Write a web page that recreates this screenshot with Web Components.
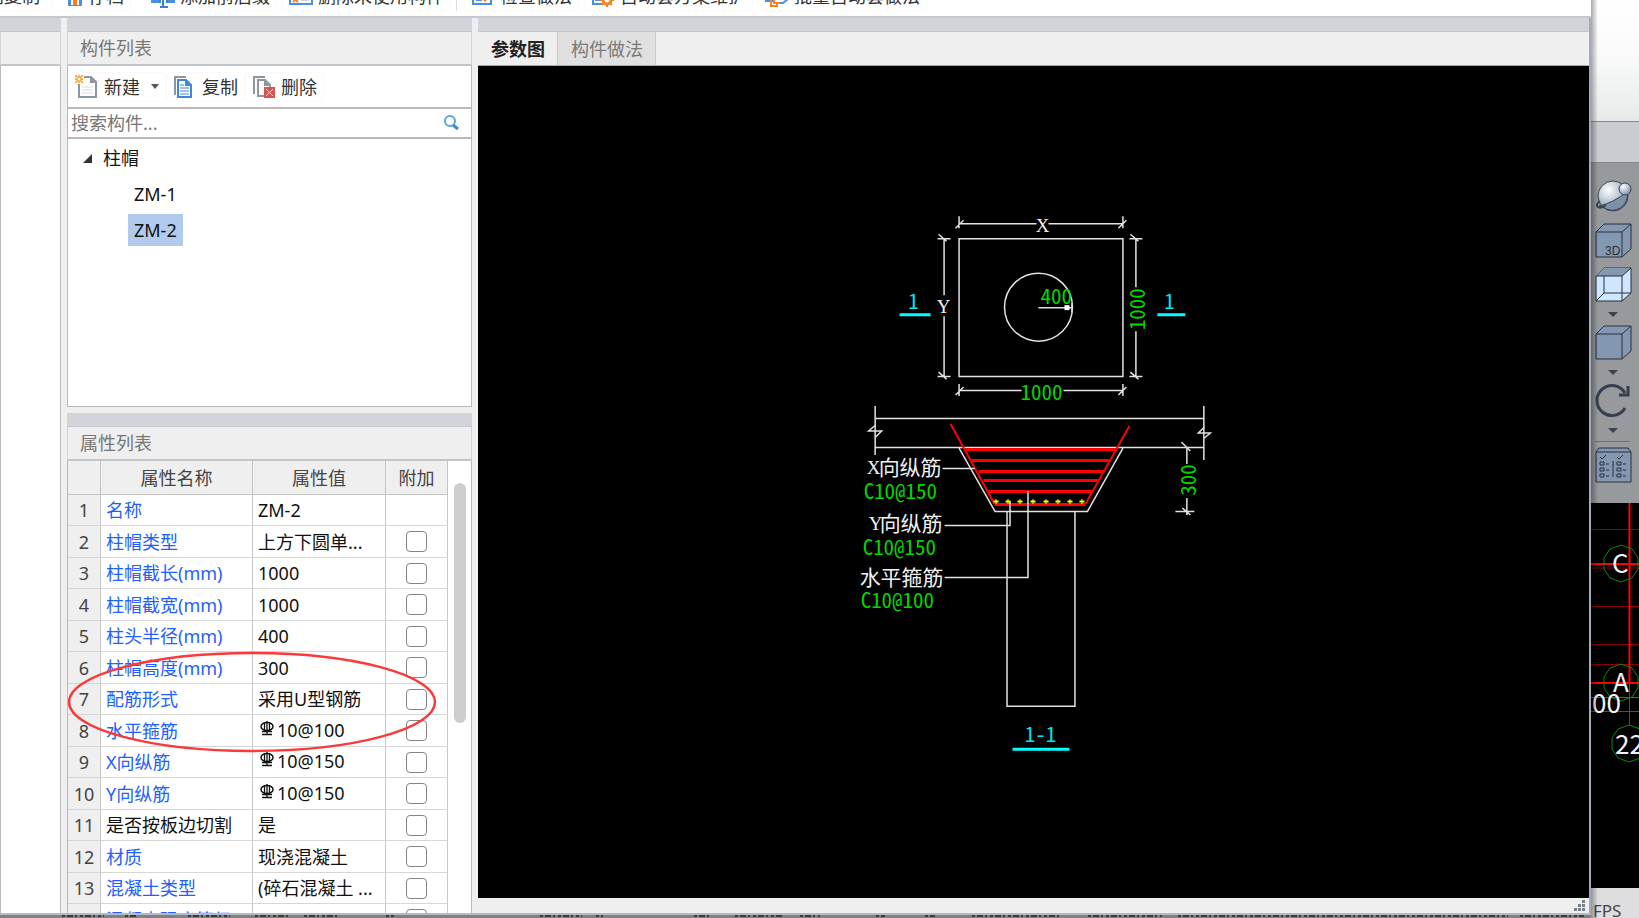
<!DOCTYPE html>
<html lang="zh-CN">
<head>
<meta charset="utf-8">
<title>构件列表</title>
<style>
	html, body { margin: 0; height: 100%; }
	body {
		overflow: hidden; background: #7f8183; color: #1a1a1a;
		font: 18px/24px "Noto Sans", "Noto Sans CJK SC", sans-serif;
	}
	.desk { display: flex; height: 100%; }
</style>
</head>
<body>
<div class="desk">
	<app-window></app-window>
	<view-strip></view-strip>
</div>

<script>
const define = (name, html, setup) => {
	const template = document.createElement('template');
	template.innerHTML = html;
	customElements.define(name, class extends HTMLElement {
		constructor() {
			super();
			this.attachShadow({ mode: 'open' }).append(template.content.cloneNode(true));
		}
		connectedCallback() {
			if (setup) setup(this, this.shadowRoot);
		}
	});
};

const ICONS = {
	save: `<path d="M8 3H1v12h7" fill="#fff" stroke="#4a90e2" stroke-width="2"/><path d="M9 4h14v18H9z" fill="#4a90e2"/><path d="M12 12h8v9h-8z" fill="#fff"/><path d="M14 15h4v6h-4z" fill="#f58220"/>`,
	affix: `<path d="M0 8h8v11H0z M17 8h7v11h-7z" fill="#4a90e2"/><path d="M9 19V6h7v13 M12 6v16 M9 23h8" fill="none" stroke="#3b7fd4" stroke-width="2"/>`,
	unused: `<path d="M1 5h22v15H1z" fill="#fff" stroke="#4a90e2" stroke-width="2"/><path d="M4 13l5 5M9 13l-5 5" stroke="#f58220" stroke-width="2"/><path d="M12 16h8" stroke="#9ab"/>`,
	check: `<path d="M2 5h18v15H2z" fill="#fff" stroke="#4a90e2" stroke-width="2"/><path d="M5 16h6" stroke="#4a90e2" stroke-width="2"/><path d="M10 13l4-5 4 5-4 5z" fill="#f36f21"/>`,
	scheme: `<path d="M11 20H2V5h17v6" fill="#fff" stroke="#4a90e2" stroke-width="2"/><path d="M4 16h5" stroke="#4a90e2" stroke-width="2"/><circle cx="16" cy="16" r="4" fill="#fff" stroke="#f58220" stroke-width="3"/><path d="M16 9v3M16 20v3M9 16h3M20 16h3M11 11l2 2M19 19l2 2M21 11l-2 2M13 19l-2 2" stroke="#f58220" stroke-width="2"/>`,
	batch: `<path d="M1 4h14v13H1z" fill="#fff" stroke="#4a90e2" stroke-width="2"/><path d="M9 7h14v8l-5 4H9z" fill="#fff" stroke="#4a90e2" stroke-width="2"/><path d="M6 12v10h6v-3M9 12v7h6" fill="none" stroke="#f58220" stroke-width="2"/>`,
	create: `<path d="M4 9v13h17V7l-5-5H9" fill="#fff" stroke="#8b969f" stroke-width="2"/><path d="M15 2v6h6z" fill="#8b969f"/><path d="M7 12h11M7 15h11M7 18h11" stroke="#dcdce4" stroke-width="1"/><path d="M0 0l8 8M8 0l-8 8M4 0v8M0 4h8" stroke="#ff9c1a" stroke-width="1.5"/><circle cx="4" cy="4" r="2" fill="#fff" stroke="#ff9c1a"/>`,
	copy: `<path d="M2 20V2h11" fill="none" stroke="#8b969f" stroke-width="2"/><path d="M5 5h8l5 5v12H5z" fill="#fff" stroke="#3f86dc" stroke-width="2"/><path d="M12 5v6h6z" fill="#3f86dc"/><path d="M7 10h4M7 13h9M7 16h9M7 19h9" stroke="#3f86dc" stroke-width="1"/>`,
	remove: `<path d="M2 19V2h11" fill="none" stroke="#8b969f" stroke-width="2"/><path d="M12 21H6V5h7l5 5v2" fill="#fff" stroke="#8b969f" stroke-width="2"/><path d="M12 5v6h6z" fill="#8b969f"/><path d="M12 12h11v11H12z" fill="#d9534f"/><path d="M14 14l7 7M21 14l-7 7" stroke="#fff" stroke-width="1"/>`
};

define('tool-button', `
	<style>
		:host { display: block; flex-shrink: 0; }
		button {
			display: flex; align-items: center; gap: 5px; height: 30px; padding: 0 6px;
			background: #fff; border: 1px solid #fafafa; border-radius: 4px;
			color: #333; font: inherit; white-space: nowrap;
		}
		svg { width: 24px; height: 24px; }
		svg:empty { display: none; }
		.arrow { display: none; border: 4px solid transparent; border-top: 5px solid #555; border-bottom: 0; margin-left: 6px; }
		:host([menu]) .arrow { display: block; }
	</style>
	<button type="button"><svg viewBox="0 0 24 24"></svg><slot></slot><span class="arrow"></span></button>
`, (el, root) => {
	root.querySelector('svg').innerHTML = ICONS[el.getAttribute('icon')] || '';
});

define('dock-panel', `
	<style>
		:host { display: flex; flex-direction: column; min-width: 0; min-height: 0; background: #efefef; }
		.grip { height: 13px; flex-shrink: 0; background: #d2d4da; border-bottom: 1px solid #c5c9cf; }
		header {
			display: flex; align-items: center; height: 32px; flex-shrink: 0; padding-left: 12px;
			border: 1px solid #d0d2d5; border-width: 0 1px; border-bottom: 2px solid #c2c6ca; color: #777;
		}
		.body {
			flex: 1; min-height: 0; display: flex; flex-direction: column; background: #fff;
			border: 1px solid #b9b9b9; border-top: 0; box-sizing: border-box; overflow: hidden;
		}
		:host([tail]) .body { border-bottom: 0; }
	</style>
	<div class="grip"></div>
	<header></header>
	<div class="body"><slot></slot></div>
`, (el, root) => {
	root.querySelector('header').textContent = el.getAttribute('heading') || '';
});

define('component-list', `
	<style>
		:host { display: flex; flex-direction: column; flex: 1; }
		.tools { display: flex; align-items: center; height: 43px; border-bottom: 2px solid #b9b9b9; box-sizing: border-box; }
		.search { display: flex; align-items: center; height: 30px; border-bottom: 2px solid #b9b9b9; box-sizing: border-box; padding-right: 12px; }
		input { flex: 1; min-width: 0; border: 0; outline: 0; padding: 0 3px; font: inherit; color: #333; background: none; }
		input::placeholder { color: #777; opacity: 1; }
		ul { list-style: none; margin: 0; padding: 0; }
		.tree { padding: 1px 0 0 15px; }
		.row { display: flex; align-items: center; height: 36px; gap: 11px; color: #111; }
		.tree ul { padding-left: 45px; }
		.item { padding: 0 6px; height: 32px; border: 0; background: none; font: inherit; color: #111; }
		.item[aria-current] { background: #b1cbec; }
	</style>
	<div class="tools">
		<tool-button icon="create" menu>新建</tool-button>
		<tool-button icon="copy">复制</tool-button>
		<tool-button icon="remove">删除</tool-button>
	</div>
	<div class="search">
		<input type="text" placeholder="搜索构件..." aria-label="搜索构件">
		<svg width="16" height="16" viewBox="0 0 16 16"><circle cx="7" cy="6" r="5" fill="none" stroke="#5ba7d1" stroke-width="2"/><path d="M10 10l5 4" stroke="#3a8fc4" stroke-width="3"/></svg>
	</div>
	<ul class="tree">
		<li>
			<div class="row"><svg width="9" height="9"><path d="M9 0v9H0z" fill="#333"/></svg>柱帽</div>
			<ul>
				<li class="row"><button type="button" class="item">ZM-1</button></li>
				<li class="row"><button type="button" class="item" aria-current="true">ZM-2</button></li>
			</ul>
		</li>
	</ul>
`);

// name, value, kind: b = plain black name, r = value starts with the HRB400 mark
const PROPS = [
	['名称', 'ZM-2'],
	['柱帽类型', '上方下圆单...'],
	['柱帽截长(mm)', '1000'],
	['柱帽截宽(mm)', '1000'],
	['柱头半径(mm)', '400'],
	['柱帽高度(mm)', '300'],
	['配筋形式', '采用U型钢筋'],
	['水平箍筋', '10@100', 'r'],
	['X向纵筋', '10@150', 'r'],
	['Y向纵筋', '10@150', 'r'],
	['是否按板边切割', '是', 'b'],
	['材质', '现浇混凝土'],
	['混凝土类型', '(碎石混凝土 ...'],
	['混凝土强度等级', '']
];
const REBAR = `<svg width="16" height="16" viewBox="0 0 16 16"><path d="M8 0v14M5.500 1.500v8M10.500 1.500v8M3 10.500h10M3 13.500h10" stroke="#111" stroke-width="1.3"/><ellipse cx="8" cy="5.500" rx="6" ry="4" fill="none" stroke="#111" stroke-width="1.5"/></svg>`;

define('property-table', `
	<style>
		:host { display: flex; flex: 1; min-height: 0; position: relative; }
		table { flex: 1; border-collapse: separate; border-spacing: 0; table-layout: fixed; width: 0; height: max-content; }
		th, td {
			height: 31px; padding: 0 0 0 5px; box-sizing: border-box; text-align: left; font-weight: 400;
			border-right: 1px solid #c9c9c9; border-bottom: 1px solid #d6d6d6;
			white-space: nowrap; overflow: hidden; color: #111;
		}
		tbody tr:nth-child(even) > * { height: 32px; }
		thead th { height: 34px; padding: 0; text-align: center; background: #efefef; color: #444; border-color: #c4c4c4; }
		tbody th { padding: 0; text-align: center; background: #efefef; color: #444; }
		.name { color: #1f5eff; }
		.plain { color: #111; }
		.on { padding: 0; text-align: center; }
		.bar-mark { padding-bottom: 2px; }
		td svg { vertical-align: top; margin: 3px 2px 0 1px; }
		input {
			appearance: none; display: block; width: 21px; height: 21px; margin: 0 auto;
			border: 1px solid #858585; border-radius: 4px; background: #fff;
		}
		.scroll { width: 23px; flex-shrink: 0; display: flex; justify-content: center; background: #fff; }
		.thumb { width: 12px; height: 240px; margin-top: 22px; border-radius: 6px; background: #cdcdcd; }
		.mark { position: absolute; left: 0; top: 189px; pointer-events: none; }
	</style>
	<table>
		<colgroup><col width="33"><col><col width="133"><col width="62"></colgroup>
		<thead><tr><th></th><th>属性名称</th><th>属性值</th><th>附加</th></tr></thead>
		<tbody></tbody>
	</table>
	<div class="scroll"><div class="thumb"></div></div>
	<svg class="mark" width="372" height="104"><ellipse cx="184" cy="52" rx="183" ry="49" fill="none" stroke="#f93a3a" stroke-width="2.500"/></svg>
`, (el, root) => {
	root.querySelector('tbody').innerHTML = PROPS.map(([name, value, kind], i) => `
		<tr>
			<th scope="row">${i + 1}</th>
			<td class="${kind === 'b' ? 'plain' : 'name'}">${name}</td>
			<td${kind === 'r' ? ' class="bar-mark"' : ''}>${kind === 'r' ? REBAR : ''}${value}</td>
			<td class="on">${i ? `<input type="checkbox" aria-label="附加 ${name}">` : ''}</td>
		</tr>`).join('');
});

define('section-drawing', `
	<style>
		:host { display: block; flex: 1; min-height: 0; background: #000; }
		svg { display: block; width: 100%; height: 100%; }
		.w { fill: none; stroke: #e2e2e2; stroke-width: 1.5; }
		.red { fill: none; stroke: #f00; stroke-width: 3; }
		.thin { stroke-width: 2; }
		.cy { fill: none; stroke: #0ff; stroke-width: 3; }
		text { font: 21px "Noto Sans Mono CJK SC", "Noto Sans CJK SC", monospace; font-weight: 300; fill: #f0f0f0; }
		.g { fill: #00d800; }
		.c { fill: #00e5ee; }
		.s { font: 19px "Liberation Serif", serif; }
		.m { text-anchor: middle; }
	</style>
	<svg viewBox="477 66 1112 832">
		<!-- plan -->
		<path class="w" d="M958.500 238.500H1122.500V376.500H958.500z"/>
		<circle class="w" cx="1038" cy="307" r="34"/>
		<path class="w" d="M1038 307.500H1072M1071.500 303v9"/>
		<path d="M1064 305h5v5h-5z" fill="#fff"/>
		<path class="w" d="M958.500 223.500H1036M1048 223.500H1122.500M958.500 216v12M1122.500 216v12M955 228l8-8M1118 228l8-8"/>
		<path class="w" d="M958.500 390.500H1021M1063 390.500H1122.500M958.500 384v12M1122.500 384v12M955 395l8-8M1118 395l8-8"/>
		<path class="w" d="M943.500 238.500V295M943.500 316V376.500M937 238.500h13M937 376.500h13M938 234l8 7M938 372l8 7"/>
		<path class="w" d="M1135.500 238.500V287M1135.500 331V376.500M1129 238.500h13M1129 376.500h13M1130 234l8 7M1130 372l8 7"/>
		<text class="s m" x="1042" y="232">X</text>
		<text class="s m" x="943" y="313">Y</text>
		<text class="g" x="1040" y="304">400</text>
		<text class="g m" x="1041" y="400">1000</text>
		<text class="g m" transform="translate(1145 309) rotate(-90)">1000</text>
		<text class="c m" x="913" y="309">1</text>
		<text class="c m" x="1169" y="309">1</text>
		<path class="cy" d="M899 314.500h31M1157 314.500h28"/>
		<!-- slab and column -->
		<path class="w" d="M874.500 418.500H1203.500M874.500 447.500H1203.500M874.500 406v49M1203.500 406v54"/>
		<path class="w" d="M875 425l-7 6h13l-6 6M1204 427l-6 6h12l-6 5"/>
		<path class="w" d="M958.500 448L994.500 511.500H1087L1122.500 448M1006.500 512V706.500H1074.500V512"/>
		<path class="red thin" d="M950 424L994 504M1085 504L1129 426"/>
		<path class="red" d="M994 504.500H1085M964 449.500H1117M971 460.500H1109M978 471.500H1103M983 480.500H1098M988 491.500H1092"/>
		<path d="M993 501.500h5M1005 501.500h5M1017 501.500h5M1030 501.500h5M1043 501.500h5M1055 501.500h5M1067 501.500h5M1079 501.500h5" stroke="#ff0" stroke-width="2"/>
		<path d="M995.500 499v5M1007.500 499v5M1019.500 499v5M1032.500 499v5M1045.500 499v5M1057.500 499v5M1069.500 499v5M1081.500 499v5" stroke="#ff0"/>
		<path class="w" d="M942 468.500H974M944 525.500H1009.500V501M944 577.500H1027.500V491"/>
		<path class="w" d="M1186.500 447.500V464M1186.500 498V515M1175 511.500h19M1181 442l9 9M1182 508l8 7"/>
		<text class="g m" transform="translate(1196 480) rotate(-90)">300</text>
		<text class="s" x="866" y="474">X</text><text x="878" y="475">向纵筋</text>
		<text class="g" x="863" y="499">C10@150</text>
		<text class="s" x="868" y="530">Y</text><text x="879" y="531">向纵筋</text>
		<text class="g" x="862" y="555">C10@150</text>
		<text x="859" y="585">水平箍筋</text>
		<text class="g" x="860" y="608">C10@100</text>
		<text class="c m" x="1040" y="742">1-1</text>
		<path class="cy" d="M1012 749.500h57"/>
	</svg>
`);

define('app-window', `
	<style>
		:host { display: flex; flex-direction: column; flex: 1; min-width: 0; background: #efefef; }
		.bar {
			display: flex; align-items: flex-end; gap: 5px; height: 11px; padding-bottom: 5px; flex-shrink: 0;
			background: #fff; border-bottom: 2px solid #c5c9cf; overflow: clip;
		}
		.bar tool-button:first-child { margin-left: -39px; }
		.bar .wide { margin-left: 8px; }
		.sep { width: 1px; height: 30px; background: #ddd; margin-right: 2px; flex-shrink: 0; }
		main {
			flex: 1; min-height: 0; display: grid; grid-template-columns: 61px 405px 1fr; gap: 6px;
			border-right: 2px solid #a3abbb;
		}
		.left { display: grid; grid-template-rows: 389fr 500fr; gap: 6px; min-height: 0; }
		.view { display: flex; flex-direction: column; min-width: 0; min-height: 0; }
		.grip { height: 13px; flex-shrink: 0; background: #d2d4da; border-bottom: 1px solid #c5c9cf; }
		.tabs { display: flex; height: 33px; flex-shrink: 0; border-bottom: 1px solid #aaa; }
		.tabs button {
			border: 0; border-right: 1px solid #c9cbce; background: #e0e0e0; color: #7a7a7a;
			font: inherit; padding: 0 12px 0 13px;
		}
		.tabs button[aria-selected="true"] { background: #efefef; color: #222; font-weight: 700; }
		.grab { height: 15px; flex-shrink: 0; display: flex; justify-content: flex-end; align-items: center; padding-right: 4px; }
		.under {
			height: 3px; flex-shrink: 0; border-top: 2px solid #b4bac6; background: #7f8183;
		}
		.under svg { display: block; width: 100%; height: 3px; }
	</style>
	<div class="bar">
		<tool-button>层间复制</tool-button>
		<tool-button icon="save">存档</tool-button>
		<tool-button icon="affix" class="wide">添加前后缀</tool-button>
		<tool-button icon="unused">删除未使用构件</tool-button>
		<span class="sep"></span>
		<tool-button icon="check">检查做法</tool-button>
		<tool-button icon="scheme">自动套方案维护</tool-button>
		<tool-button icon="batch">批量自动套做法</tool-button>
	</div>
	<main>
		<dock-panel tail></dock-panel>
		<div class="left">
			<dock-panel heading="构件列表"><component-list></component-list></dock-panel>
			<dock-panel heading="属性列表" tail><property-table></property-table></dock-panel>
		</div>
		<section class="view">
			<div class="grip"></div>
			<div class="tabs" role="tablist">
				<button type="button" role="tab" aria-selected="true">参数图</button>
				<button type="button" role="tab">构件做法</button>
			</div>
			<section-drawing></section-drawing>
			<div class="grab"><svg width="12" height="12" fill="#7b8088"><path d="M9 0h3v3H9zM5 4h3v3H5zM9 4h3v3H9zM1 8h3v3H1zM5 8h3v3H5zM9 8h3v3H9z"/></svg></div>
		</section>
	</main>
	<div class="under"><svg><path d="M62 1H104M125 1h12M188 1h42M255 1h34M304 1h34M386 1h8M540 1h42M596 1h7M694 1h16M735 1h48M800 1h20M876 1h9M925 1h10M972 1h90M1088 1h74M1178 1h330M1520 1h64" stroke="#3a3a3a" stroke-width="2" stroke-dasharray="3 2 6 2 2 3"/></svg></div>
`);

define('view-strip', `
	<style>
		:host {
			display: flex; flex-direction: column; width: 48px; flex-shrink: 0; position: relative;
			background: #000; overflow: hidden;
		}
		:host::before {
			content: ""; position: absolute; left: 0; top: 0; bottom: 0; width: 7px;
			background: linear-gradient(90deg, #00000055, #00000000); pointer-events: none;
		}
		.sky { height: 121px; background: linear-gradient(#fff, #fafafa 45%, #e6ebea); flex-shrink: 0; }
		.band { height: 42px; border-top: 1px solid #85888b; border-bottom: 1px solid #85888b; background: #c9ccd0; flex-shrink: 0; box-sizing: border-box; }
		nav {
			display: flex; flex-direction: column; align-items: flex-start; gap: 7px; height: 340px; flex-shrink: 0;
			padding: 16px 0 0 4px; box-sizing: border-box; background: #97999d;
		}
		button { border: 0; padding: 0; background: none; display: block; }
		button svg { display: block; width: 37px; height: 37px; }
		.arrow { width: 0; height: 0; margin: 1px 0 1px 13px; border: 5px solid transparent; border-top-color: #3a4350; border-bottom: 0; }
		hr { width: 35px; margin: 0 0 -2px; border: 0; border-top: 1px solid #6e7074; }
		.grid { flex: 1; min-height: 0; overflow: hidden; }
		.grid text { font: 26px "Noto Sans CJK SC", sans-serif; fill: #f4f4f4; }
		footer { height: 30px; padding: 13px 0 0 2px; box-sizing: border-box; flex-shrink: 0; background: #dedee0; color: #444; font-size: 17px; line-height: 20px; overflow: hidden; }
	</style>
	<div class="sky"></div>
	<div class="band"></div>
	<nav>
		<button type="button" aria-label="动态观察"><svg viewBox="0 0 37 37">
			<defs><radialGradient id="ball" cx=".35" cy=".3" r=".8"><stop offset="0" stop-color="#fff"/><stop offset="1" stop-color="#7188a6"/></radialGradient></defs>
			<circle cx="18" cy="17" r="15" fill="url(#ball)" stroke="#3a4350"/><path d="M4 27Q18 24 32 13A15 15 0 0 1 8 28z" fill="#7e91ab" stroke="#3a4350"/>
			<path d="M5 22q-5 4-2 6t8-2" fill="none" stroke="#3a4350" stroke-width="2"/><circle cx="30" cy="10" r="6" fill="url(#ball)" stroke="#3a4350"/></svg></button>
		<button type="button" aria-label="三维"><svg viewBox="0 0 37 37">
			<path d="M1 9l8-8h27v25l-9 8H1z" fill="#8497b0" stroke="#28313d"/><path d="M1 9h26v25M27 9l9-8" fill="none" stroke="#28313d"/><text x="10" y="32" font-family="Liberation Sans" font-size="12" fill="#28313d">3D</text></svg></button>
		<button type="button" aria-label="线框"><svg viewBox="0 0 37 37">
			<path d="M1 9l8-8h27v25l-9 8H1z" fill="#cfe6ff" stroke="#28313d"/><path d="M1 9l8-8h27l-9 8z" fill="#8497b0"/><path d="M1 9h26v25M27 9l9-8M9 9v17h27M9 26l-8 8" fill="none" stroke="#28313d"/></svg></button>
		<span class="arrow"></span>
		<button type="button" aria-label="实体"><svg viewBox="0 0 37 37">
			<path d="M1 9l8-8h27v25l-9 8H1z" fill="#8497b0" stroke="#28313d"/><path d="M1 9h26v25M27 9l9-8" fill="none" stroke="#28313d"/></svg></button>
		<span class="arrow"></span>
		<button type="button" aria-label="旋转"><svg viewBox="0 0 37 37">
			<path d="M30 25A15 15 0 1 1 30 10" fill="none" stroke="#36404c" stroke-width="3"/><path d="M33 3v9h-9" fill="none" stroke="#36404c" stroke-width="3"/></svg></button>
		<span class="arrow"></span>
		<hr>
		<button type="button" aria-label="显示设置"><svg viewBox="0 0 37 37">
			<path d="M1 5l3-4h29l3 4v30H1z" fill="#8497b0" stroke="#28313d"/><path d="M1 5h35M18 14v16M5 10l2 2 4-4M22 10l2 2 4-4M5 15h4v3H5zM5 21h4v3H5zM5 27h4v3H5zM22 15h4v3h-4zM22 21h4v3h-4zM22 27h4v3h-4zM11 17h3M11 23h3M11 29h3M28 17h3M28 23h3M28 29h3" fill="none" stroke="#28313d"/></svg></button>
	</nav>
	<div class="grid"><svg width="48" height="385">
		<path d="M0 26.500h48M0 65h48M0 103.500h48M0 141.500h48M0 161.500h48" stroke="#8a0000" stroke-width="1"/>
		<path d="M0 61h48M0 180h48M38.500 0v180" stroke="#f00" stroke-width="2" fill="none"/>
		<path d="M0 194.500h48" stroke="#7a5a10"/>
		<path d="M0 208.500h48M38.500 181v42" stroke="#0a7d0a" fill="none"/>
		<g fill="none" stroke="#0a8a0a">
			<path d="M30 42l11 4 6 9v11l-6 9-11 4-11-4-6-9V55l6-9z"/>
			<path d="M30 161l11 4 6 9v11l-6 9-11 4-11-4-6-9v-11l6-9z"/>
			<path d="M38 222l11 4 6 9v11l-6 9-11 4-11-4-6-9v-11l6-9z"/>
		</g>
		<text x="21" y="70">C</text><text x="22" y="189">A</text>
		<text x="1" y="210">00</text><text x="24" y="251">22</text>
	</svg></div>
	<footer>FPS</footer>
`);
</script>
</body>
</html>
